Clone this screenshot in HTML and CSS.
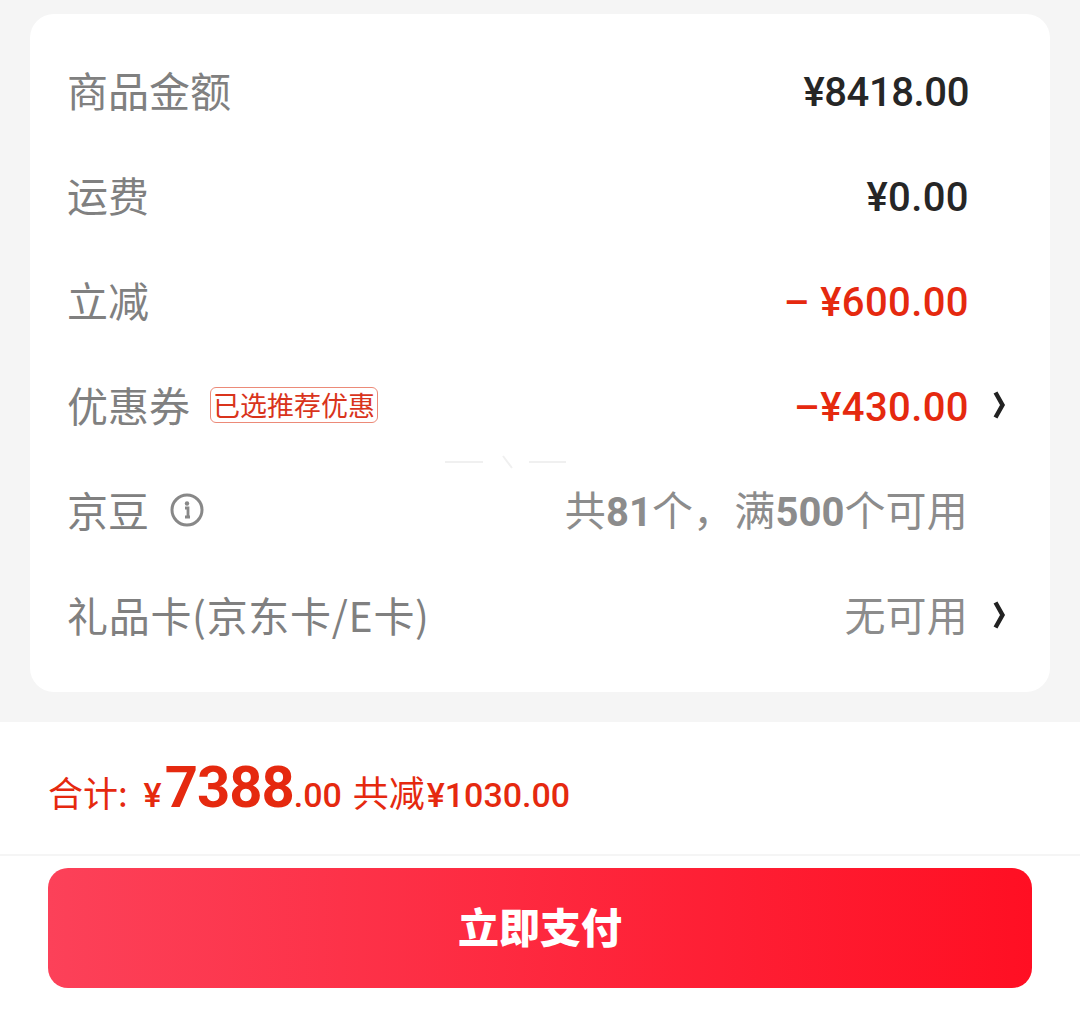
FILE: index.html
```html
<!DOCTYPE html>
<html lang="zh-CN">

<head>
  <meta charset="UTF-8">
  <meta name="viewport" content="width=device-width, initial-scale=1.0">
  <title>确认订单</title>
  <link rel="stylesheet" href="styles.css">
</head>

<body>
  <div class="top-area">
    <div class="card">
      <div class="row">
        <div class="label">商品金额</div>
        <div class="value num tight">¥8418.00</div>
      </div>
      <div class="row">
        <div class="label">运费</div>
        <div class="value num">¥0.00</div>
      </div>
      <div class="row">
        <div class="label">立减</div>
        <div class="value num red">– ¥600.00</div>
      </div>
      <div class="row">
        <div class="label">优惠券<span class="tag">已选推荐优惠</span></div>
        <div class="value num red">–¥430.00</div>
        <svg class="arrow" width="14" height="28" viewBox="0 0 14 28">
          <path d="M3.5 1.5 L10.5 14 L3.5 26.5" fill="none" stroke="#222" stroke-width="4.4" />
        </svg>
      </div>
      <div class="row">
        <div class="label">京豆
          <svg class="info" width="34" height="34" viewBox="0 0 34 34">
            <circle cx="17" cy="17" r="15" fill="none" stroke="#888" stroke-width="3" />
            <circle cx="17" cy="10.5" r="2.2" fill="#888" />
            <path d="M15 15 H18 V24 M15 24 H20" fill="none" stroke="#888" stroke-width="2.8" />
          </svg>
        </div>
        <div class="value gray">共<b class="num">81</b>个，满<b class="num">500</b>个可用</div>
      </div>
      <div class="row">
        <div class="label wide">礼品卡(京东卡/E卡)</div>
        <div class="value gray">无可用</div>
        <svg class="arrow" width="14" height="28" viewBox="0 0 14 28">
          <path d="M3.5 1.5 L10.5 14 L3.5 26.5" fill="none" stroke="#222" stroke-width="4.4" />
        </svg>
      </div>
      <svg class="ghost" width="122" height="14" viewBox="0 0 122 14">
        <path d="M0 7 H38 M58 1 L67 13 M84 7 H121" fill="none" stroke="#f0f0f0" stroke-width="2" />
      </svg>
    </div>
  </div>
  <div class="total">
    <span class="total-label">合计:</span>
    <span class="yen">¥</span><span class="big">7388</span><span class="cents">.00</span>
    <span class="saved">共减<span class="saved-num">¥1030.00</span></span>
  </div>
  <div class="pay-box">
    <button class="pay-btn">立即支付</button>
  </div>
</body>

</html>
```

FILE: styles.css
```css
* {
  box-sizing: border-box;
  padding: 0;
  margin: 0;
}

html,
body {
  width: 100%;
  height: 100%;
}

body {
  background-color: #fff;
  font-family: "Noto Sans CJK SC", "Noto Sans", sans-serif;
}

.top-area {
  height: 722px;
  padding: 14px 30px 0;
  background-color: #f5f5f5;
}

.card {
  position: relative;
  height: 678px;
  padding: 26px 0 0 37px;
  background-color: #fff;
  border-radius: 24px;
}

.row {
  display: flex;
  align-items: center;
  height: 105px;
  padding-right: 81px;
  position: relative;
}

.label {
  flex: 1;
  display: flex;
  align-items: center;
  padding-bottom: 8px;
  font-size: 41px;
  color: #808080;
  white-space: nowrap;
}

.label.wide {
  letter-spacing: 0.7px;
}

.value {
  font-size: 41px;
  white-space: nowrap;
}

.num {
  font-family: Roboto, "Noto Sans CJK SC", sans-serif;
  font-weight: 500;
  font-size: 40px;
  letter-spacing: 0.4px;
  color: #262626;
}

.num.tight {
  letter-spacing: -0.4px;
}

.value.red {
  color: #e5290f;
}

.value.gray {
  margin-right: 1px;
  padding-bottom: 9px;
  letter-spacing: 0.2px;
  color: #8c8c8c;
}

.value.gray .num {
  letter-spacing: 0;
  color: #8c8c8c;
  font-weight: 700;
}

.tag {
  margin: 2px 0 0 20px;
  height: 36px;
  line-height: 33px;
  padding: 0 2px;
  border: 1px solid #ec8a78;
  border-radius: 6px;
  font-size: 27px;
  color: #d9341c;
}

.info {
  margin-left: 21px;
  margin-top: 2px;
}

.arrow {
  position: absolute;
  right: 44px;
  top: 36px;
}

.ghost {
  position: absolute;
  left: 415px;
  top: 441px;
}

.total {
  height: 134px;
  padding: 31px 0 0 48px;
  border-bottom: 2px solid #f5f5f5;
  color: #e5290f;
  font-size: 35px;
  white-space: nowrap;
}

.yen {
  font-family: Roboto, sans-serif;
  font-weight: 500;
  font-size: 34px;
  margin-left: 8px;
}

.big {
  margin-left: 3px;
  font-family: Roboto, sans-serif;
  font-weight: 700;
  font-size: 58px;
  letter-spacing: -1px;
}

.cents {
  font-family: Roboto, sans-serif;
  font-weight: 500;
  font-size: 34px;
}

.saved {
  margin-left: 3px;
  font-size: 36px;
}

.saved-num {
  margin-left: 2px;
  font-family: Roboto, sans-serif;
  font-weight: 500;
  font-size: 34px;
}

.pay-box {
  padding: 12px 48px 0;
}

.pay-btn {
  display: block;
  width: 100%;
  height: 120px;
  padding-bottom: 6px;
  border: none;
  border-radius: 20px;
  background: linear-gradient(90deg, #fc4159, #ff0f23);
  color: #fff;
  font-family: inherit;
  font-size: 41px;
  font-weight: 900;
}
```
